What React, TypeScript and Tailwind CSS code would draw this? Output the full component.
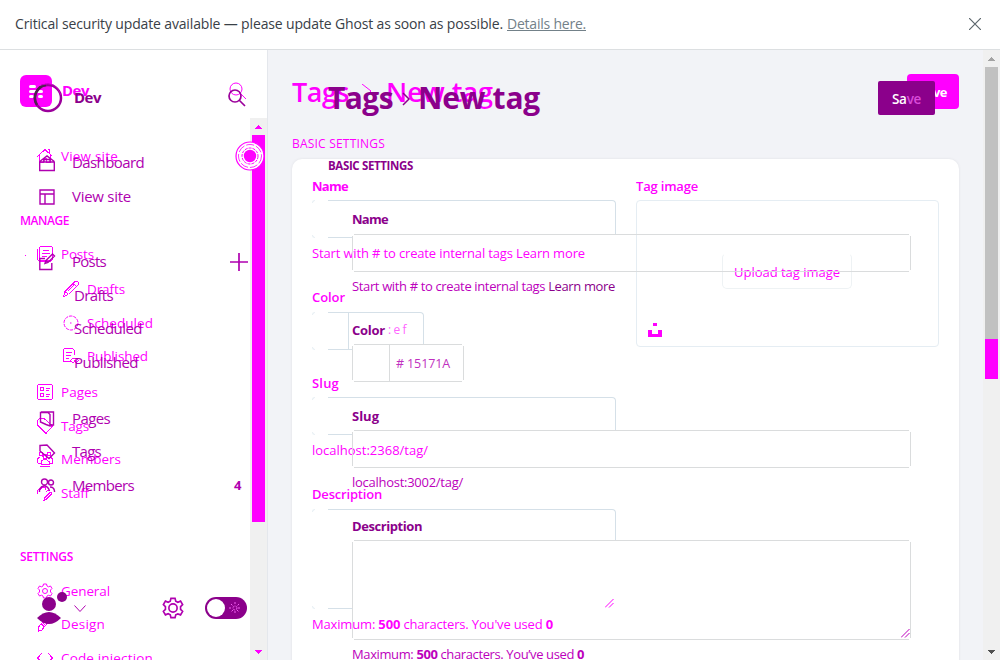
import { useLayoutEffect, useRef, useState } from 'react';
import type { ReactNode } from 'react';

/* Text run whose tracking is adjusted to fill a given width. */
function T({ w, className = '', children }: { w: number; className?: string; children: ReactNode }) {
  const ref = useRef<HTMLSpanElement>(null);
  const [spacing, setSpacing] = useState(0);
  useLayoutEffect(() => {
    const el = ref.current;
    if (!el) return;
    const count = (el.textContent || '').length;
    setSpacing((w - el.getBoundingClientRect().width) / count);
  }, [w]);
  return (
    <span ref={ref} className={`shrink-0 self-center whitespace-pre ${className}`} style={{ letterSpacing: spacing }}>
      {children}
    </span>
  );
}

const gear = 'M6.5 1h3l.5 2 1.5.8 2-.8 1.5 2.5L13.5 7v2l1.5 1.5-1.5 2.5-2-.7L10 13l-.5 2h-3L6 13l-1.500-.8-2 .8L1 10.500 2.500 9V7L1 5.500 2.500 3l2 .8L6 3z';

const paths: Record<string, string> = {
  house: 'M.5 8.500 8 1.500l7.500 7M2.500 7v7.500h4V10h3v4.500h4V7M10.500 1.500h2v4',
  posts: 'M4.500.500h9a2 2 0 0 1 2 2v10a2 2 0 0 1-2 2h-9a2 2 0 0 1-2-2v-10a2 2 0 0 1 2-2zM.5 2.500v11l2 2h11M6 4.500h6M5 7.500h8M5 10.500h5',
  pencil: 'M.5 15.500 2 10.500 11.500 1a2.200 2.200 0 0 1 3.500 3L5.500 13.500zM2 10.500l3.500 3M10 2.500l3.500 3M4.500 10.500l7-7',
  publish: 'M7.500 13.500H2a1.500 1.500 0 0 1-1.500-1.500V2A1.500 1.500 0 0 1 2 .5h7.500l2 2v4M3 4.500h6M3 7.500h5M3 10.500h3M7.500 12.500q4-5 8 0q-4 5-8 0M11 12h1v1h-1z',
  pages: 'M2 .5h12A1.500 1.500 0 0 1 15.500 2v12a1.500 1.500 0 0 1-1.500 1.500H2A1.500 1.500 0 0 1 .5 14V2A1.500 1.500 0 0 1 2 .5zM3.500 3.500h3v3h-3zM3.500 9.500h3v3h-3zM9 4.500h4M9 6.500h3M9 10.500h4M9 12.500h3',
  tag: 'M.5 7V2.500l2-2H7L15.500 8 9 15.500zM3 3.500h1',
  group: 'M8 3a2 2.500 0 0 1 0 5a2 2.500 0 0 1 0-5M4 1a2 2 0 0 1 0 4a2 2 0 0 1 0-4M12 1a2 2 0 0 1 0 4a2 2 0 0 1 0-4M.5 12V8l2-2M15.500 12V8l-2-2M4 13v-2.500q4-4 8 0V13zM.5 12h3M12.500 12h3M3 15.500h10',
  staff: 'M.5 9V6q1-3 4-2M4 4.500a2.500 2.500 0 1 1 5 0M7 15.500l1-3 5-5q2-1 2 1l-5.500 5.500zM9 7q2-3 4-1',
  design: 'M1 15.500V12l3-4 9-7q2-1 2 1L8 10l-3 4zM4 8l4 3M6 7l3 3',
  code: 'M5 3 .5 8 5 13M11 3l4.500 5-4.500 5',
  gear: `${gear}M8 5.500a2.500 2.500 0 0 1 0 5a2.500 2.500 0 0 1 0-5`,
  home2: 'M.7 6.500v9h14.600v-9M.7 6.500 8 1l7.300 5.500M5 7V4.500h6V7M1 7h14',
  layout: 'M1 1h14v14H1zM1 5h14M6 5v10',
  compose: 'M6 4.500H.8v11h12V9M7 6.500 13.500 0l2 2L9 8.500l-3 1zM7 6.500l2 2',
  copy: 'M2 1h12.500v13H11M1.500 1.500H9l2 2V15L7 13.500 1.500 11z',
  tag2: 'M1 1.500 8 1l7.500 8L10 14.500 1 7z',
  people: 'M5.500 1a3 3 0 0 1 0 6a3 3 0 0 1 0-6M12 2a2 2 0 0 1 0 5a2 2 0 0 1 0-5M.500 14V12Q2 8 5.500 8T10.500 13M11 9q4 0 4.500 4v1',
  search: 'M7 1a6 6 0 0 1 0 12A6 6 0 0 1 7 1M11.500 11.500 17 17',
};

function Icon({ name, crisp = false, className = '' }: { name: string; crisp?: boolean; className?: string }) {
  const sharp = crisp && name !== 'gear';
  return (
    <svg viewBox="0 0 16 16" fill="none" stroke="currentColor" strokeWidth={crisp ? 1 : 1.4} shapeRendering={sharp ? 'crispEdges' : 'auto'} className={`size-4 shrink-0 overflow-visible ${className}`}>
      <path d={paths[name]} />
    </svg>
  );
}

function Clock() {
  return (
    <svg viewBox="0 0 16 16" fill="none" stroke="currentColor" className="size-4 shrink-0 overflow-visible">
      <circle cx="8" cy="8" r="7" strokeDasharray="3.400 1" />
      <path d="M7 8h1.500" />
    </svg>
  );
}

function NavA({ icon, label, w, h, sub }: { icon: string; label: string; w: number; h: string; sub?: boolean }) {
  return (
    <div className={`flex shrink-0 items-center gap-2 ${h} ${sub ? 'pl-[63px]' : 'pl-[37px]'}`}>
      {icon === 'clock' ? <Clock /> : <Icon name={icon} crisp />}
      <T w={w} className="text-[13.5px] leading-5">{label}</T>
    </div>
  );
}

function NavB({ icon, label, w, h, children }: { icon?: string; label: string; w: number; h: string; children?: ReactNode }) {
  return (
    <div className={`flex shrink-0 items-center ${h} ${icon ? 'gap-[17px] pl-[39px]' : 'pl-[74px]'}`}>
      {icon && <Icon name={icon} />}
      <T w={w} className="pb-0.5 text-[15px] leading-5">{label}</T>
      {children}
    </div>
  );
}

function SidebarA() {
  return (
    <div className="col-start-1 row-start-1 flex h-[610px] flex-col overflow-hidden pt-[25px] text-[#ff00ff]">
      <div className="flex h-8 shrink-0 items-center">
        <div className="ml-5 flex size-8 flex-col items-center justify-center gap-[2px] rounded-md bg-[#ff00ff]">
          <div className="flex gap-1"><i className="h-[3px] w-[7px] rounded bg-white" /><i className="h-[3px] w-[3px] rounded bg-white" /></div>
          <i className="h-[3px] w-[14px] rounded bg-white" />
          <div className="flex gap-1"><i className="h-[3px] w-[5px] rounded bg-white" /><i className="h-[3px] w-[5px] rounded bg-white" /></div>
        </div>
        <T w={27} className="ml-2.5 pb-0.5 text-[15px] font-bold">Dev</T>
        <svg viewBox="0 0 18 18" fill="none" stroke="currentColor" className="ml-[140px] size-[18px]"><path d={paths.search} /></svg>
      </div>
      <div className="mt-[33px] flex shrink-0 items-center">
        <NavA icon="house" label="View site" w={57} h="h-8" />
        <svg viewBox="0 0 30 30" fill="none" stroke="currentColor" className="z-10 ml-[117px] size-[30px] shrink-0">
          <circle cx="15" cy="15" r="14" fill="white" strokeWidth="1.200" />
          <circle cx="15" cy="15" r="11.500" strokeDasharray="8 2" strokeWidth=".8" />
          <circle cx="15" cy="15" r="8" strokeDasharray="3 1" />
          <circle cx="15" cy="15" r="6.200" fill="currentColor" stroke="none" />
        </svg>
      </div>
      <div className="mt-[38px] flex h-5 shrink-0 pl-5"><T w={49} className="translate-y-px text-xs font-semibold">MANAGE</T></div>
      <div className="mt-2 flex"><i className="ml-[25px] mt-[17px] -mr-[26px] size-px bg-[#ff00ff]" /><NavA icon="posts" label="Posts" w={33} h="h-8" /></div>
      <div className="h-0.5 shrink-0" />
      <NavA sub icon="pencil" label="Drafts" w={38} h="h-[34px]" />
      <NavA sub icon="clock" label="Scheduled" w={66} h="h-[34px]" />
      <NavA sub icon="publish" label="Published" w={61} h="h-[32px]" />
      <div className="h-[3px] shrink-0" />
      <NavA icon="pages" label="Pages" w={37} h="h-[34px]" />
      <NavA icon="tag" label="Tags" w={28} h="h-[34px]" />
      <NavA icon="group" label="Members" w={60} h="h-[32px]" />
      <div className="h-px shrink-0" />
      <NavA icon="staff" label="Staff" w={28} h="h-[34px]" />
      <div className="mt-9 flex h-5 shrink-0 pl-5"><T w={53} className="translate-y-px text-xs font-semibold">SETTINGS</T></div>
      <div className="h-2 shrink-0" />
      <NavA icon="gear" label="General" w={49} h="h-[34px]" />
      <NavA icon="design" label="Design" w={44} h="h-[32px]" />
      <div className="h-px shrink-0" />
      <NavA icon="code" label="Code injection" w={92} h="h-[34px]" />
    </div>
  );
}

function SidebarB() {
  return (
    <div className="col-start-1 row-start-1 flex h-[610px] flex-col pt-[33px] text-[#b000b0]">
      <div className="flex h-[30px] shrink-0 items-center">
        <svg viewBox="0 0 30 30" fill="none" className="ml-[33px] size-[30px]">
          <circle cx="15" cy="15" r="13" stroke="#9b009b" strokeWidth="2.500" />
          <path d="M13 2a13 13 0 0 0-9 20" stroke="#4d244d" strokeWidth="2.500" />
          <path d="M8 2q15-5 20 10" stroke="#c800c8" />
        </svg>
        <T w={27} className="ml-[11px] pb-0.5 text-[15px] font-bold text-[#8b008b]">Dev</T>
        <svg viewBox="0 0 18 18" fill="none" stroke="#9b009b" strokeWidth="1.700" className="ml-[127px] size-[18px]"><path d={paths.search} /></svg>
      </div>
      <div className="h-[33px] shrink-0" />
      <NavB icon="home2" label="Dashboard" w={72} h="h-[34px]" />
      <NavB icon="layout" label="View site" w={59} h="h-[34px]" />
      <div className="h-[31px] shrink-0" />
      <NavB icon="compose" label="Posts" w={34} h="h-[34px]">
        <svg viewBox="0 0 18 18" stroke="currentColor" strokeWidth="1.700" className="ml-[107px] size-[18px] shrink-0"><path d="M9 0v18M0 9h18" /></svg>
      </NavB>
      <NavB label="Drafts" w={39} h="h-[34px]" />
      <NavB label="Scheduled" w={68} h="h-[32px]" />
      <div className="h-px shrink-0" />
      <NavB label="Published" w={64} h="h-[34px]" />
      <div className="h-[22px] shrink-0" />
      <NavB icon="copy" label="Pages" w={38} h="h-[34px]" />
      <NavB icon="tag2" label="Tags" w={29} h="h-[32px]" />
      <div className="h-px shrink-0" />
      <NavB icon="people" label="Members" w={62} h="h-[34px]">
        <T w={7} className="ml-[83px] text-[13px] font-bold">4</T>
      </NavB>
      <div className="mt-auto mb-8 flex h-10 shrink-0 items-center">
        <svg viewBox="0 0 32 32" fill="#8b008b" className="ml-9 size-8"><circle cx="13" cy="12" r="7" /><circle cx="26" cy="5" r="5" /><path d="M1 26q12-12 24 0q-12 12-24 0" /></svg>
        <svg viewBox="0 0 12 7" fill="none" stroke="currentColor" className="h-[7px] w-3 translate-x-1.5"><path d="m.5.5 5.500 6 5.500-6" /></svg>
        <svg viewBox="0 0 16 16" fill="none" stroke="#b000b0" strokeWidth="1.200" className="ml-[82px] size-[22px]"><path d={gear} /><circle cx="8" cy="8" r="3" /></svg>
        <div className="ml-[21px] flex h-[22px] w-[42px] items-center justify-between rounded-full bg-[#8b008b] pr-[6px] pl-[2px]">
          <div className="size-[18px] rounded-full bg-white" />
          <svg viewBox="0 0 12 12" stroke="#f060f0" strokeDasharray="2 1" className="size-3"><circle cx="6" cy="6" r="2" fill="none" /><path d="M6 0v3M6 9v3M0 6h3M9 6h3M2 2l2 2M8 8l2 2M10 2 8 4M4 8l-2 2" /></svg>
        </div>
      </div>
    </div>
  );
}

function Arrow({ down, color }: { down?: boolean; color: string }) {
  return (
    <svg viewBox="0 0 7 4" fill={color} shapeRendering="crispEdges" className="h-1 w-[7px] shrink-0">
      <path d={down ? 'M0 0h7L3.500 4z' : 'M0 4h7L3.500 0z'} />
    </svg>
  );
}

/* Outline with open corners. */
function OpenBox({ className, children }: { className: string; children?: ReactNode }) {
  return (
    <div className={`flex shrink-0 flex-col ${className}`}>
      <div className="mx-0.5 h-px bg-[#dadcdd]" />
      <div className="my-px flex min-h-0 flex-1 border-x border-[#dadcdd]">{children}</div>
      <div className="mx-0.5 h-px bg-[#dadcdd]" />
    </div>
  );
}

/* Field outline seen partly behind the field in front of it. */
function PartBox({ className, side, divided, children }: { className: string; side: string; divided?: boolean; children?: ReactNode }) {
  return (
    <div className={`flex shrink-0 flex-col justify-between ${className}`}>
      <div className="flex justify-between">
        <i className="size-[3px] rounded-tl border-t border-l border-[#e9f0f4]" />
        <div className={`ml-[13px] flex-1 rounded-tr border-t border-r border-[#d5e0e8] ${side}`}>
          {divided && <div className="ml-5 h-[36px] border-l border-[#d5e0e8]" />}
          {children}
        </div>
      </div>
      <div className="flex h-px items-end">
        <i className="size-[3px] rounded-bl border-b border-l border-[#e9f0f4]" />
        <i className="ml-[13px] h-px w-6 bg-[#d5e0e8]" />
      </div>
    </div>
  );
}

function Grip({ className }: { className: string }) {
  return <svg viewBox="0 0 9 9" stroke="currentColor" strokeWidth="1" className={`size-[9px] ${className}`}><path d="M0 8.500 8.500 0M4 8.500 8.500 4" /></svg>;
}

function MainA() {
  return (
    <div className="col-start-1 row-start-1 flex h-[610px] flex-col overflow-hidden pl-6 text-[#ff00ff]">
      <div className="mt-[22px] flex h-10 shrink-0 items-center text-[27px] leading-10 font-semibold">
        <T w={57}>Tags</T>
        <svg viewBox="0 0 10 16" fill="none" stroke="currentColor" className="ml-[13px] h-4 w-2.5"><path d="m0 0 9 7-7 7" /></svg>
        <T w={107} className="ml-[14px]">New tag</T>
      </div>
      <div className="mt-[22px] flex h-5 shrink-0"><T w={93} className="text-xs">BASIC SETTINGS</T></div>
      <div className="mt-[5px] flex h-[600px] w-[667px] shrink-0 rounded-[10px] bg-white pl-5 shadow-[0_0_3px_rgba(0,0,0,0.08)]">
        <div className="flex w-[304px] flex-col text-[13px] leading-5">
          <div className="mt-[17px] flex h-5 shrink-0"><T w={36} className="font-bold">Name</T></div>
          <PartBox className="mt-1 h-[38px] bg-white" side="h-[34px]" />
          <div className="mt-[5px] flex h-5 shrink-0"><T w={273}>Start with # to create internal tags Learn more</T></div>
          <div className="mt-[24px] flex h-5 shrink-0"><T w={33} className="font-semibold">Color</T></div>
          <PartBox className="mt-[5px] h-[38px] w-28" side="h-[32px]" divided />
          <div className="mt-[23px] flex h-5 shrink-0"><T w={27} className="font-semibold">Slug</T></div>
          <PartBox className="mt-[4px] h-[38px]" side="h-[33px]" />
          <div className="mt-[5px] flex h-5 shrink-0"><T w={116}>localhost:2368/tag/</T></div>
          <div className="mt-[24px] flex h-5 shrink-0"><T w={70} className="font-semibold">Description</T></div>
          <PartBox className="mt-[5px] h-[100px]" side="h-[31px]" />
          <Grip className="-mt-[10px] mb-[1px] ml-[293px]" />
          <div className="mt-[5px] flex h-5 shrink-0"><T w={241}>Maximum: <b>500</b> characters. You've used <b>0</b></T></div>
        </div>
        <div className="ml-5 flex w-[303px] flex-col">
          <div className="mt-[18px] mb-[-1px] flex h-5 shrink-0"><T w={62} className="text-[13px] font-semibold">Tag image</T></div>
          <div className="mt-1 flex h-[147px] shrink-0 flex-col rounded border border-[#e5edf3]">
            <div className="mr-auto ml-[85px] mt-[52px] flex h-9 w-[130px] items-center justify-center rounded-[5px] border border-t-transparent border-[#eef2f4] text-[13px]"><T w={106} className="pt-[3px]">Upload tag image</T></div>
            <svg viewBox="0 0 14 14" fill="currentColor" className="mt-[34px] ml-[11px] size-3.5"><path d="M5 0h4v3H5zM0 7h4v4h6V7h4v7H0z" /></svg>
          </div>
        </div>
      </div>
    </div>
  );
}

function MainB() {
  return (
    <div className="col-start-1 row-start-1 flex h-[610px] flex-col overflow-hidden pl-[60px] text-[#bc00bc]">
      <div className="mt-[28px] flex h-10 shrink-0 items-center text-[30px] leading-10 font-bold text-[#8b008b]">
        <T w={65}>Tags</T>
        <svg viewBox="0 0 8 14" fill="none" stroke="currentColor" strokeWidth="1.500" className="ml-[9px] h-3.5 w-2 translate-y-px"><path d="m1 1 6 6-6 6" /></svg>
        <T w={122} className="ml-2">New tag</T>
      </div>
      <div className="mt-[38px] mb-[-1px] flex h-5 shrink-0"><T w={85} className="text-[11.5px] font-bold text-[#8b008b]">BASIC SETTINGS</T></div>
      <div className="flex flex-col pl-6 text-[13px] leading-5">
        <div className="mt-[34px] flex h-5 shrink-0"><T w={36} className="font-bold text-[#8b008b]">Name</T></div>
        <OpenBox className="mt-[5px] h-[38px] w-[559px]" />
        <div className="mt-[4px] flex h-5 shrink-0"><T w={263}>Start with # to create internal tags <span className="text-[#8b008b]">Learn more</span></T></div>
        <div className="mt-[24px] flex h-5 shrink-0">
          <T w={33} className="font-bold text-[#8b008b]">Color</T>
          <T w={21} className="ml-[3px] text-[12px] text-[#ff66ff]">:ef</T>
        </div>
        <OpenBox className="mt-[4px] h-[38px] w-28">
          <div className="-my-px w-[37px] border-r border-[#dadcdd]" />
          <T w={54} className="ml-1.5 pt-0.5 text-[12.5px] text-[#c030c0]"># 15171A</T>
        </OpenBox>
        <div className="mt-[24px] flex h-5 shrink-0"><T w={27} className="font-bold text-[#8b008b]">Slug</T></div>
        <OpenBox className="mt-[4px] h-[38px] w-[559px]" />
        <div className="mt-[4px] mb-px flex h-5 shrink-0"><T w={111}>localhost:3002/tag/</T></div>
        <div className="mt-[23px] flex h-5 shrink-0"><T w={70} className="font-bold text-[#8b008b]">Description</T></div>
        <OpenBox className="mt-[4px] h-[100px] w-[559px]"><Grip className="mt-auto ml-auto" /></OpenBox>
        <div className="mt-[4px] flex h-5 shrink-0"><T w={232}>Maximum: <b>500</b> characters. You’ve used <b>0</b></T></div>
      </div>
    </div>
  );
}

export default function App() {
  return (
    <div className="flex h-[660px] w-[1000px] flex-col overflow-hidden bg-white font-['Open_Sans','Noto_Sans',sans-serif]">
      <header className="flex h-[50px] shrink-0 items-center border-b border-[#dcdfe1] pb-0.5 pl-[15px] text-[14px] text-[#394047]">
        <T w={488}>Critical security update available — please update Ghost as soon as possible.</T>
        <T w={79} className="ml-1 text-[#738189] underline">Details here.</T>
        <svg viewBox="0 0 12 12" stroke="#5c666c" strokeWidth="1.200" className="ml-[383px] size-3"><path d="m0 0 12 12M12 0 0 12" /></svg>
      </header>
      <div className="flex h-[610px]">
        <aside className="grid w-[268px] shrink-0 border-r border-[#e4e7ec]">
          <div className="col-start-1 row-start-1 mt-[68px] ml-auto flex h-[542px] w-[17px] flex-col items-center bg-[#f0f0f0]">
            <div className="flex h-[17px] items-center"><Arrow color="#f0f" /></div>
            <div className="h-[387px] w-[13px] bg-[#ff00ff]" />
            <div className="mt-auto flex h-[17px] items-center"><Arrow down color="#f0f" /></div>
          </div>
          <SidebarA />
          <SidebarB />
        </aside>
        <main className="grid w-[715px] shrink-0 overflow-hidden bg-[#f2f3f7]">
          <MainA />
          <MainB />
          <div className="col-start-1 row-start-1 mt-6 ml-[610px] grid h-[42px] w-[81px]">
            <div className="col-start-1 row-start-1 ml-[29px] flex h-[35px] w-[52px] rounded bg-[#ff00ff] pl-3"><T w={28} className="pt-0.5 text-[13px] font-bold text-white">Save</T></div>
            <div className="col-start-1 row-start-1 mt-[7px] flex h-[34px] w-[57px] rounded-[2px] bg-[#8b008b] pl-3.5"><T w={29} className="pt-0.5 text-[13.5px] font-semibold text-white">Sa<span className="text-[#d94cd9]">ve</span></T></div>
          </div>
        </main>
        <div className="flex w-[17px] shrink-0 flex-col items-center bg-[#f0f0f0]">
          <div className="flex h-[17px] items-center"><Arrow color="#a3a3a3" /></div>
          <div className="h-[272px] w-[13px] bg-[#c1c1c1]" />
          <div className="h-10 w-[13px] bg-[#ff00ff]" />
          <div className="mt-auto flex h-[17px] items-center"><Arrow down color="#505050" /></div>
        </div>
      </div>
    </div>
  );
}
